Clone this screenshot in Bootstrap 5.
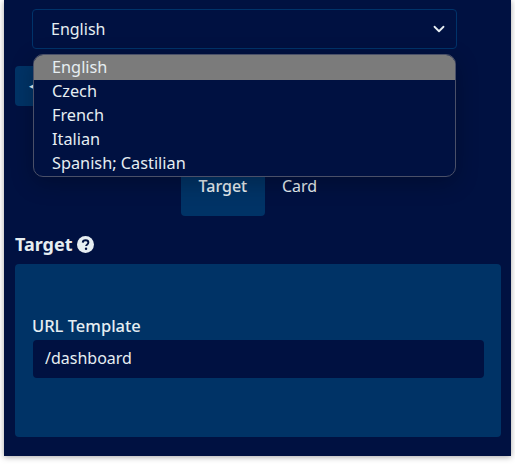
<!DOCTYPE html>
<html lang="en">
<head>
<meta charset="utf-8">
<title>Target</title>
<link rel="stylesheet" href="https://cdn.jsdelivr.net/npm/bootstrap@5.3.0/dist/css/bootstrap.min.css">
<style>
html,body{height:464px;overflow:hidden;}
body{background:#fff;font-family:"Noto Sans","Open Sans",sans-serif;font-size:16px;color:#e6eef2;}
.shell{margin:0 4px;height:456px;background:#001141;box-shadow:0 1px 6px rgba(0,0,0,.35);padding:9px 10px 0 11px;}
.pick-wrap{position:relative;margin:0 44px 0 17px;}
.pick{height:40px;background-color:#001141;border:1px solid #00336a;border-radius:4px;color:#e6eef2;padding:0 36px 0 18px;font-size:16px;
background-image:url("data:image/svg+xml,%3csvg xmlns='http://www.w3.org/2000/svg' viewBox='0 0 16 16'%3e%3cpath fill='none' stroke='%23e6eef2' stroke-linecap='round' stroke-linejoin='round' stroke-width='2.400' d='m2 5 6 6 6-6'/%3e%3c/svg%3e");background-size:14px 12px;background-position:right 10px center;}
.drop{position:absolute;z-index:5;left:1px;right:1px;top:45px;padding-bottom:1px;background:#001141;border:1px solid #4a5068;border-radius:10px;overflow:hidden;box-shadow:0 6px 22px rgba(0,0,0,.25);}
.drop .list-group-item{background:transparent;border:0;border-radius:0;color:#e6eef2;padding:0 18px;height:24px;line-height:24px;font-size:16.300px;}
.drop .list-group-item.chosen{background:#7b7b7b;box-shadow:0 1px 0 #7b7b7b;}
.backbtn{width:60px;height:40px;margin-top:17px;background:#003366;border-radius:4px;color:#e6eef2;padding:8px 0 0 14px;line-height:24px;font-size:9px;}
.tabbar{margin-top:40px;height:70px;justify-content:center;margin-left:-1px;}
.tabbar .nav-link{color:#e6eef2;padding:28px 17px 0;height:70px;line-height:24px;font-size:16px;border-radius:4px;}
.tabbar .nav-link.active{background:#003366;color:#e6eef2;font-weight:500;}
.tabbar .nav-item:first-child .nav-link{width:84px;text-align:center;padding-left:0;padding-right:0;}
.headline{font-size:18px;font-weight:700;line-height:24px;margin:16px 0 8px;color:#e6eef2;}
.headline svg{vertical-align:-2px;margin-left:0;}
.targetbox{background:#003366;border-radius:4px;height:173px;padding:50px 17px 0 18px;}
.targetbox .form-label{font-weight:500;line-height:24px;margin:0 0 2px -1px;color:#e6eef2;font-size:16.500px;}
.targetbox .form-control{height:38px;background:#001141;border:0;border-radius:4px;color:#e6eef2;padding:0 12px 2px;font-size:16px;}
</style>
</head>
<body>
<div class="shell">
  <div class="pick-wrap">
    <select class="form-select pick" aria-label="Language"><option>English</option><option>Czech</option><option>French</option><option>Italian</option><option>Spanish; Castilian</option></select>
    <div class="list-group drop">
      <div class="list-group-item chosen">English</div>
      <div class="list-group-item">Czech</div>
      <div class="list-group-item">French</div>
      <div class="list-group-item">Italian</div>
      <div class="list-group-item">Spanish; Castilian</div>
    </div>
  </div>
  <div class="backbtn">&#9664;</div>
  <ul class="nav tabbar">
    <li class="nav-item"><a class="nav-link active" href="#">Target</a></li>
    <li class="nav-item"><a class="nav-link" href="#">Card</a></li>
  </ul>
  <div class="headline">Target <svg width="17" height="17" viewBox="0 0 16 16" aria-hidden="true"><circle cx="8" cy="8" r="8" fill="#e6eef2"/><path d="M5.400 6.200C5.500 4.800 6.600 4 8.100 4c1.500 0 2.600.9 2.600 2.200 0 1-.6 1.500-1.300 2-.6.4-.8.7-.8 1.300" fill="none" stroke="#001141" stroke-width="1.800"/><circle cx="8.500" cy="12" r="1.150" fill="#001141"/></svg></div>
  <div class="targetbox">
    <label class="form-label" for="tpl">URL Template</label>
    <input id="tpl" class="form-control" type="text" value="/dashboard">
  </div>
</div>
</body>
</html>
